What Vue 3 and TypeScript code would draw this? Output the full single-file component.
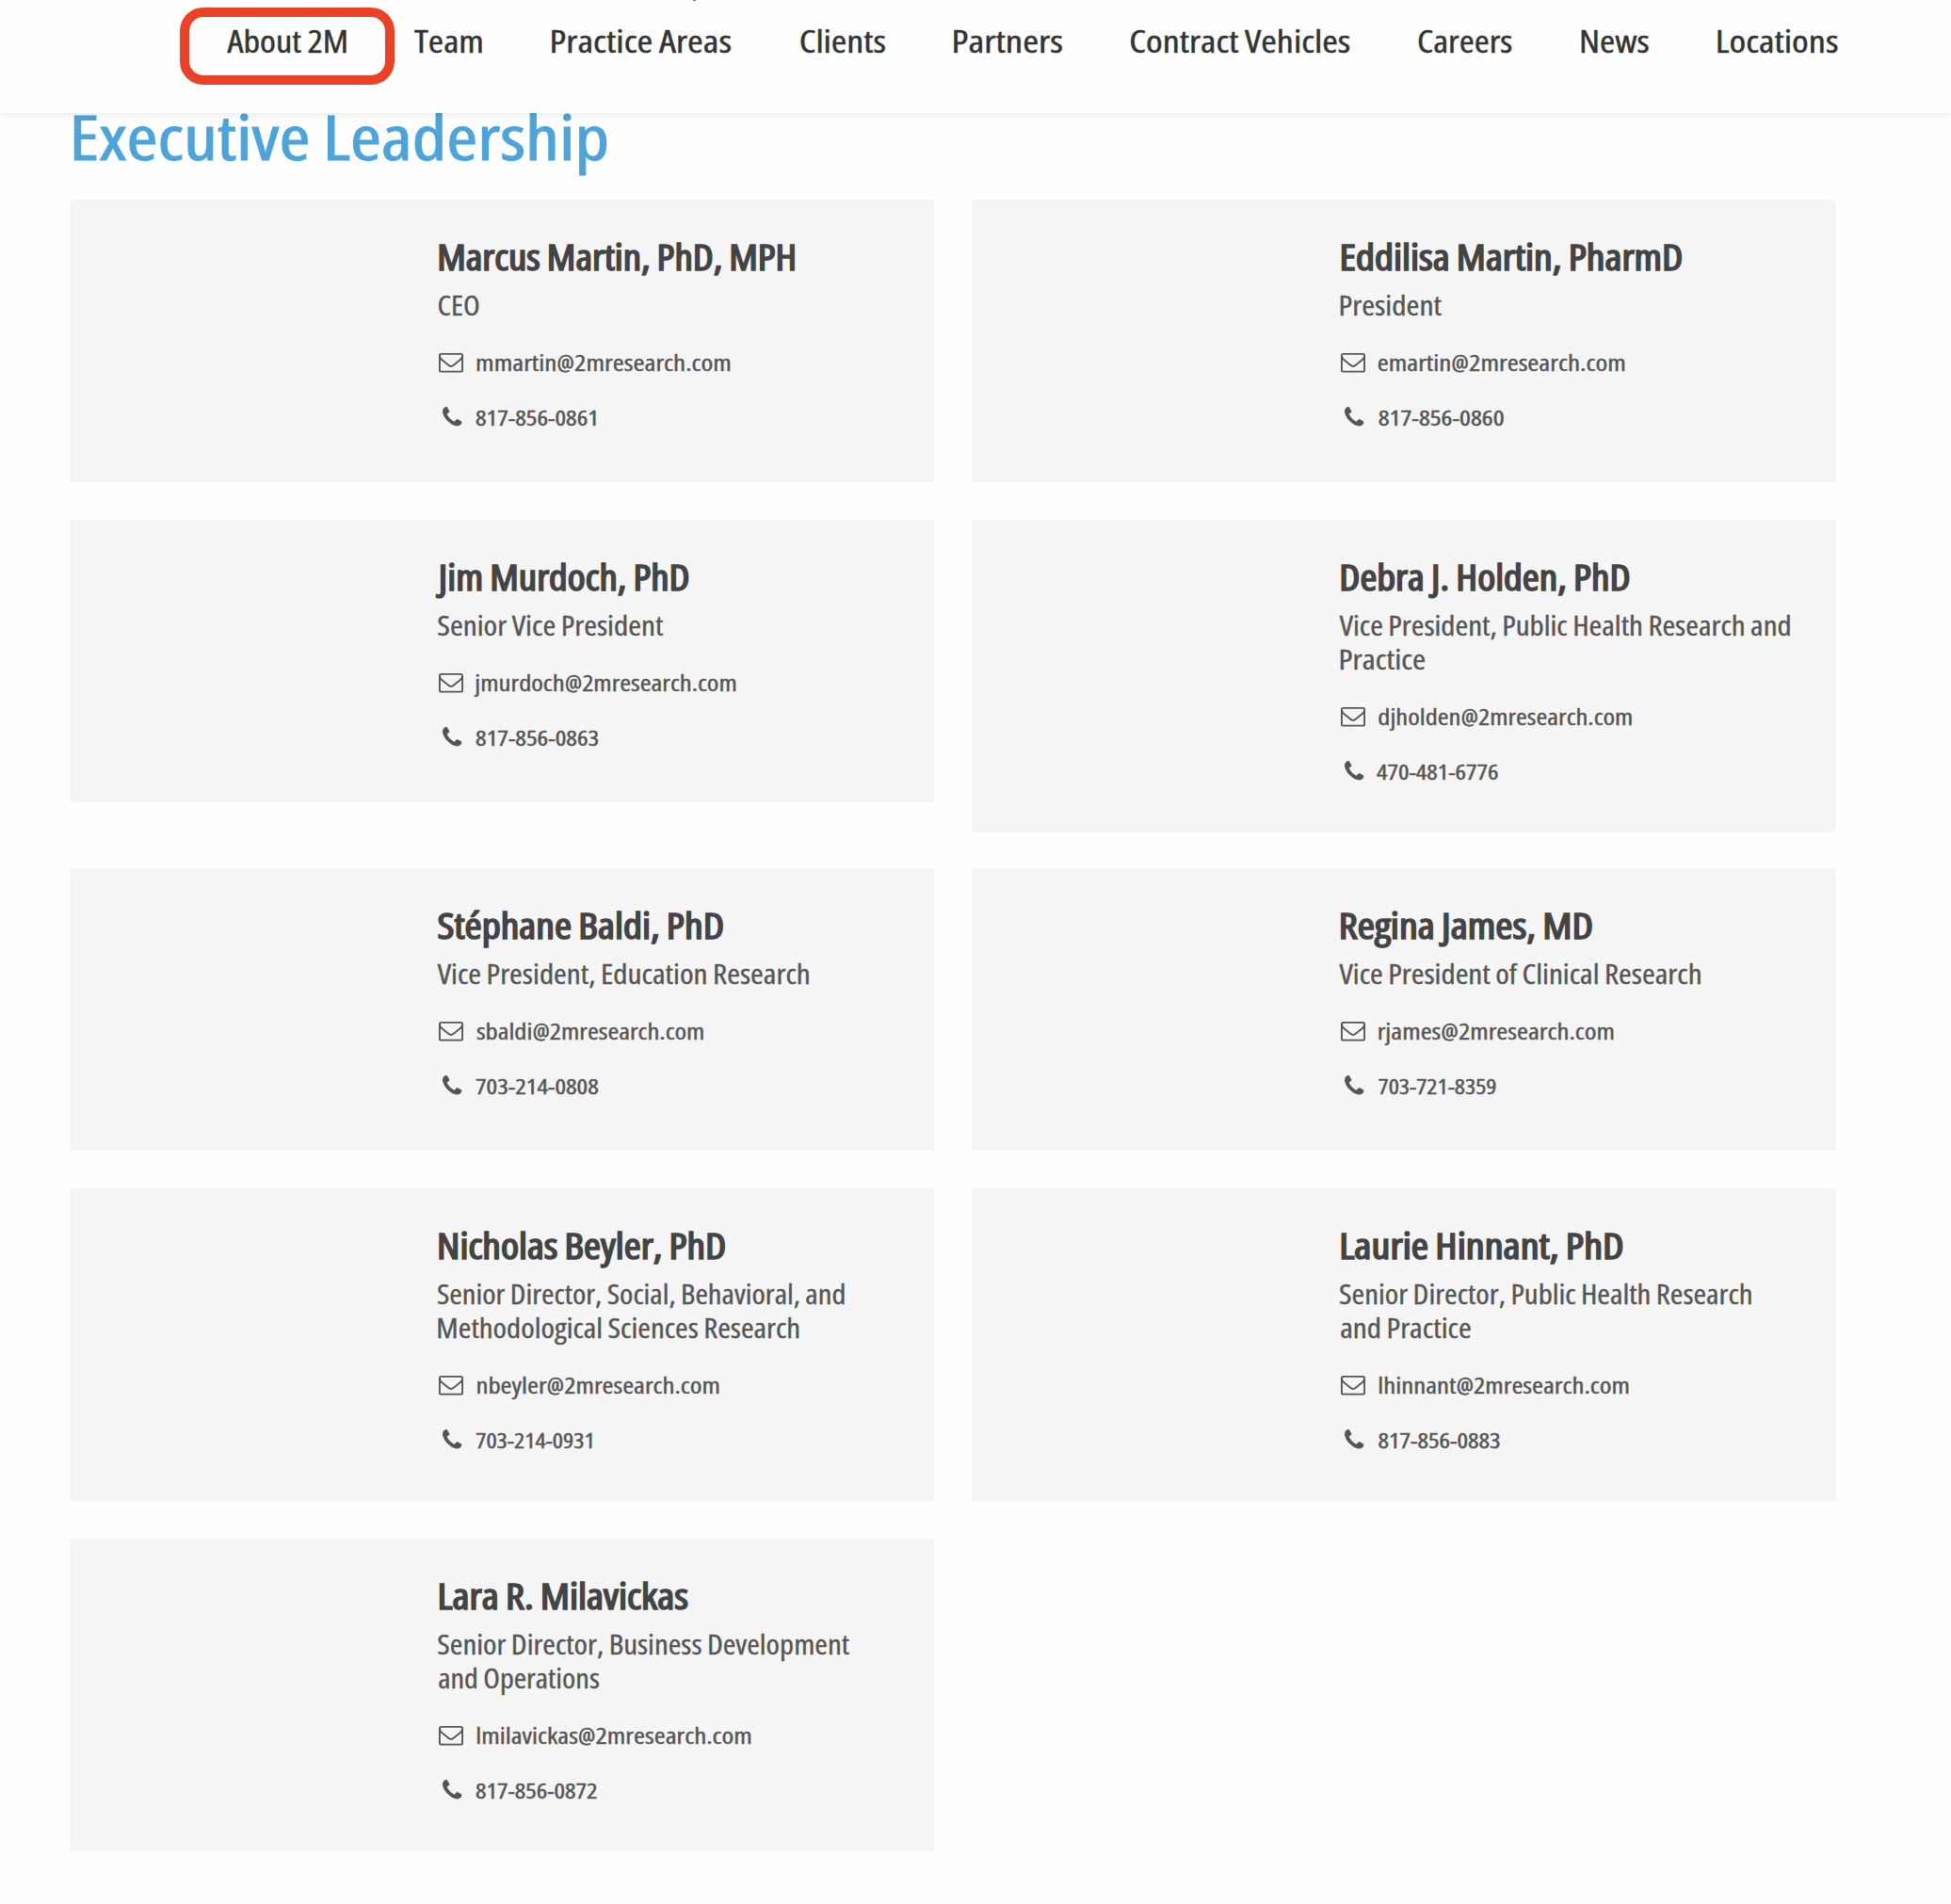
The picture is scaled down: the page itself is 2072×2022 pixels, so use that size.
<script setup lang="ts">
import { defineComponent, h } from 'vue'

const FAMILY = '"Open Sans", "Noto Sans", sans-serif'
const ctx = document.createElement('canvas').getContext('2d') as any

// One line of condensed type whose visible glyphs run from `from` to `to`
// (in px from the start of its column). `bold` is the outline width that
// thickens the regular cut.
const FitLine = defineComponent({
  props: {
    text: { type: String, required: true },
    span: { type: Array as unknown as () => number[], required: true },
    size: { type: Number, required: true },
    bold: { type: Number, default: 0.6 },
    height: { type: Number, required: true },
    baseline: { type: Number, required: true },
  },
  setup(props) {
    return () => {
      const [from, to] = props.span
      const left = from + props.bold / 2
      const right = to - props.bold / 2
      const gap = `${(-0.02 * props.size).toFixed(2)}px`
      ctx.font = `400 ${props.size}px ${FAMILY}`
      ctx.fontStretch = 'condensed'
      ctx.wordSpacing = gap
      const m = ctx.measureText(props.text)
      const scale = (right - left) / (m.actualBoundingBoxLeft + m.actualBoundingBoxRight)
      return h('svg', { width: to, height: props.height }, [
        h('text', {
          x: left + m.actualBoundingBoxLeft * scale,
          y: props.baseline,
          'font-size': props.size,
          'font-weight': 400,
          'font-family': FAMILY,
          'font-stretch': 'condensed',
          'word-spacing': gap,
          fill: 'currentColor',
          stroke: 'currentColor',
          'stroke-width': props.bold,
          textLength: m.width * scale,
          lengthAdjust: 'spacingAndGlyphs',
        }, props.text),
      ])
    }
  },
})

interface Line { text: string; span: number[] }
interface Person { name: Line; role: Line[]; email: Line; phone: Line }

const l = (text: string, from: number, to: number): Line => ({ text, span: [from, to] })

const nav: Line[] = [
  l('About 2M', -0.7, 126.3),
  l('Team', -0.2, 72.4),
  l('Practice Areas', 0.8, 192),
  l('Clients', -0.3, 90.8),
  l('Partners', -0.2, 116),
  l('Contract Vehicles', -0.7, 233.2),
  l('Careers', -1, 99.3),
  l('News', 0, 72.6),
  l('Locations', 0, 128.4),
]

const people: Person[] = [
  {
    name: l('Marcus Martin, PhD, MPH', 3.7, 383),
    role: [l('CEO', 3.6, 47.3)],
    email: l('mmartin@2mresearch.com', 4.1, 273.5),
    phone: l('817-856-0861', 2.8, 131.2),
  },
  {
    name: l('Eddilisa Martin, PharmD', 4, 366.7),
    role: [l('President', 3.7, 111)],
    email: l('emartin@2mresearch.com', 3.7, 265.3),
    phone: l('817-856-0860', 3.5, 137.3),
  },
  {
    name: l('Jim Murdoch, PhD', 0.8, 270),
    role: [l('Senior Vice President', 3.3, 242.3)],
    email: l('jmurdoch@2mresearch.com', 1, 279.4),
    phone: l('817-856-0863', 2.8, 134),
  },
  {
    name: l('Debra J. Holden, PhD', 3.8, 311),
    role: [l('Vice President, Public Health Research and', 2.5, 481.7), l('Practice', 3.8, 93.3)],
    email: l('djholden@2mresearch.com', 4.3, 273),
    phone: l('470-481-6776', 1.8, 131.2),
  },
  {
    name: l('Stéphane Baldi, PhD', 2.9, 306.4),
    role: [l('Vice President, Education Research', 2.5, 398)],
    email: l('sbaldi@2mresearch.com', 3.8, 245),
    phone: l('703-214-0808', 2.8, 133.6),
  },
  {
    name: l('Regina James, MD', 3.3, 271.3),
    role: [l('Vice President of Clinical Research', 2.3, 386.8)],
    email: l('rjames@2mresearch.com', 3.7, 253.5),
    phone: l('703-721-8359', 3.3, 129.3),
  },
  {
    name: l('Nicholas Beyler, PhD', 3.6, 308.7),
    role: [l('Senior Director, Social, Behavioral, and', 2.9, 435.3), l('Methodological Sciences Research', 3.5, 387.3)],
    email: l('nbeyler@2mresearch.com', 4.4, 261.5),
    phone: l('703-214-0931', 3, 127),
  },
  {
    name: l('Laurie Hinnant, PhD', 3.7, 304),
    role: [l('Senior Director, Public Health Research', 3, 440.8), l('and Practice', 3, 142)],
    email: l('lhinnant@2mresearch.com', 4.3, 269.5),
    phone: l('817-856-0883', 3.2, 133.3),
  },
  {
    name: l('Lara R. Milavickas', 4, 269),
    role: [l('Senior Director, Business Development', 3.3, 440), l('and Operations', 3, 174.3)],
    email: l('lmilavickas@2mresearch.com', 4.3, 295.4),
    phone: l('817-856-0872', 2.8, 132.3),
  },
]
</script>

<template>
  <div class="page">
    <header class="header">
      <span class="tail"></span>
      <nav class="nav">
        <a v-for="(item, i) in nav" :key="item.text" class="nav-item" :class="{ marked: i === 0 }">
          <FitLine :text="item.text" :span="item.span" :size="33.4" :bold="0.45" :height="50" :baseline="36" />
        </a>
      </nav>
    </header>
    <main class="main">
      <h1 class="title">
        <FitLine text="Executive Leadership" :span="[3.7, 570.8]" :size="66" :bold="1" :height="92" :baseline="49.5" />
      </h1>
      <section class="grid">
        <article v-for="p in people" :key="p.name.text" class="card" :class="{ tall: p.role.length > 1 }">
          <h2 class="name">
            <FitLine :text="p.name.text" :span="p.name.span" :size="37.6" :bold="1.6" :height="50" :baseline="38.6" />
          </h2>
          <p class="role">
            <FitLine v-for="r in p.role" :key="r.text" :text="r.text" :span="r.span" :size="28.5" :bold="0.35" :height="36" :baseline="28.5" />
          </p>
          <div class="contact email">
            <svg class="envelope" viewBox="0 256 1792 1408" preserveAspectRatio="none">
              <path d="M1664 1504v-768q-32 36-69 66-268 206-426 338-51 43-83 67t-86.5 48.5-102.5 24.5h-2q-48 0-102.5-24.5t-86.5-48.5-83-67q-158-132-426-338-37-30-69-66v768q0 13 9.5 22.5t22.5 9.5h1472q13 0 22.5-9.5t9.5-22.5zm0-1051v-24.5l-.5-13-3-12.5-5.5-9-9-7.5-14-2.5h-1472q-13 0-22.5 9.5t-9.5 22.5q0 168 147 284 193 152 401 317 6 5 35 29.5t46 37.5 44.5 31.5 50.5 27.5 43 9h2q20 0 43-9t50.5-27.5 44.5-31.5 46-37.5 35-29.5q208-165 401-317 54-43 100.5-115.5t46.5-131.5zm128-37v1088q0 66-47 113t-113 47h-1472q-66 0-113-47t-47-113v-1088q0-66 47-113t113-47h1472q66 0 113 47t47 113z" />
            </svg>
            <FitLine :text="p.email.text" :span="p.email.span" :size="24.3" :bold="0.4" :height="36" :baseline="25.8" />
          </div>
          <div class="contact phone">
            <svg class="handset" viewBox="192 128 1408 1408" preserveAspectRatio="none">
              <path d="M1600 1240q0 27-10 70.5t-21 68.5q-21 50-122 106-94 51-186 51-27 0-53-3.5t-57.5-12.5-47-14.5-55.5-20.5-49-18q-98-35-175-83-127-79-264-216t-216-264q-48-77-83-175-3-9-18-49t-20.5-55.5-14.5-47-12.5-57.5-3.5-53q0-92 51-186 56-101 106-122 25-11 68.5-21t70.5-10q14 0 21 3 18 6 53 76 11 19 30 54t35 63.5 31 53.5q3 4 17.5 25t21.5 35.5 7 28.5q0 20-28.5 50t-62 55-62 53-28.5 46q0 9 5 22.5t8.5 20.5 14 24 11.5 19q76 137 174 235t235 174q2 1 19 11.5t24 14 20.5 8.5 22.5 5q18 0 46-28.5t53-62 55-62 50-28.5q14 0 28.5 7t35.5 21.5 25 17.5q25 15 53.5 31t63.5 35 54 30q70 35 76 53 3 7 3 21z" />
            </svg>
            <FitLine :text="p.phone.text" :span="p.phone.span" :size="22" :bold="0.45" :height="36" :baseline="25.6" />
          </div>
        </article>
      </section>
    </main>
  </div>
</template>

<style>
body {
  margin: 0;
  background: #fff;
}
</style>

<style scoped>
.page {
  width: 2072px;
  height: 2022px;
  overflow: hidden;
  background: #fefefe;
  font-family: "Open Sans", "Noto Sans", sans-serif;
}
.page svg {
  display: block;
  flex: none;
  overflow: visible;
}
.header {
  position: relative;
  z-index: 1;
  box-sizing: border-box;
  height: 120px;
  padding: 20px 0 0 241.5px;
  background: #fefefe;
  box-shadow: 0 1px 10px rgba(0, 0, 0, 0.1);
}
.tail {
  position: absolute;
  left: 736px;
  top: 0;
  width: 3px;
  height: 1px;
  background: #777;
}
.nav {
  display: flex;
  gap: 72.5px;
}
.nav-item {
  position: relative;
  color: #333;
}
.marked::before {
  content: '';
  position: absolute;
  box-sizing: border-box;
  left: -50.5px;
  top: -12px;
  width: 228px;
  height: 82px;
  border: 10px solid #ec4126;
  border-radius: 25px;
}
.main {
  padding-left: 74px;
}
.title {
  margin: 0;
  color: #4ba4dc;
}
.grid {
  display: grid;
  grid-template-columns: 918px 918px;
  column-gap: 40px;
  row-gap: 40px;
  align-items: start;
}
.card {
  box-sizing: border-box;
  height: 300px;
  padding: 36px 0 0 388px;
  background: #f5f5f5;
  color: #555;
}
.card.tall {
  height: 332px;
}
.card:nth-child(4) {
  margin-bottom: -2px;
}
.name {
  margin: 0;
  color: #444;
}
.role {
  margin: 8px 0 26px;
}
.contact {
  display: flex;
  height: 36px;
}
.email {
  margin-bottom: 22px;
}
.envelope {
  width: 26px;
  height: 20.6px;
  margin: 7.3px 10px 0 4px;
  fill: #555;
}
.handset {
  width: 20.4px;
  height: 20.4px;
  margin: 5.6px 12px 0 7.6px;
  fill: #555;
}
</style>
